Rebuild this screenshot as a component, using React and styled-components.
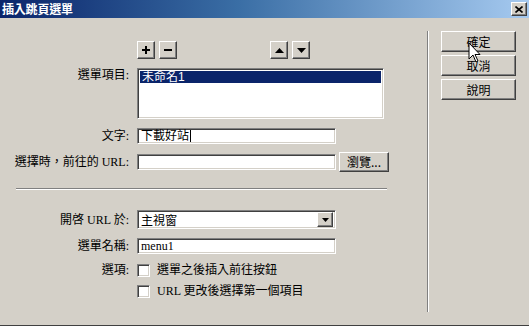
import React from 'react';
import styled, { createGlobalStyle } from 'styled-components';

const Global = createGlobalStyle`
  html, body { margin: 0; padding: 0; background: #d4d0c8; }
  body {
    font-family: "Liberation Serif", "Noto Sans CJK TC", serif;
    font-size: 12px;
    color: #000;
  }
`;

const Window = styled.div`
  position: relative;
  width: 529px;
  height: 326px;
  box-sizing: border-box;
  background: #d4d0c8;
  border-bottom: 1px solid #404040;
  display: flex;
  flex-direction: column;
  overflow: hidden;
`;

const TitleBar = styled.div`
  flex: none;
  height: 18px;
  display: flex;
  align-items: center;
  justify-content: space-between;
  padding: 0 2px;
  background: linear-gradient(to right, #0a246a 0%, #3a6ea5 45%, #a6caf0 100%);
`;

const Title = styled.span`
  color: #fff;
  font-family: "Noto Sans CJK TC", sans-serif;
  font-weight: bold;
  font-size: 12px;
  line-height: 14px;
  letter-spacing: -0.2px;
`;

const raised = `
  box-sizing: border-box;
  background: #d4d0c8;
  border: 1px solid;
  border-color: #fff #404040 #404040 #fff;
  box-shadow: inset -1px -1px #808080, inset 1px 1px #d4d0c8;
`;

const sunken = `
  box-sizing: border-box;
  background: #fff;
  border: 1px solid;
  border-color: #808080 #fff #fff #808080;
  box-shadow: inset 1px 1px #404040, inset -1px -1px #d4d0c8;
`;

const CloseButton = styled.div`
  ${raised}
  width: 16px;
  height: 14px;
  display: flex;
  align-items: center;
  justify-content: center;
`;

const Body = styled.div`
  flex: 1;
  display: flex;
  flex-direction: row;
`;

const Form = styled.div`
  width: 427px;
  box-sizing: border-box;
  padding-top: 23px;
  display: flex;
  flex-direction: column;
`;

const Row = styled.div`
  display: flex;
  align-items: ${p => (p.$top ? 'flex-start' : 'center')};
  height: ${p => p.$h}px;
  margin-top: ${p => p.$mt || 0}px;
`;

const Label = styled.div`
  width: 137px;
  box-sizing: border-box;
  padding-right: 8px;
  text-align: right;
  line-height: 14px;
  white-space: nowrap;
  flex: none;
`;

const ToolButton = styled.div`
  ${raised}
  width: 18px;
  height: 18px;
  display: flex;
  align-items: center;
  justify-content: center;
  margin-left: ${p => p.$ml || 0}px;
`;

const ListBox = styled.div`
  ${sunken}
  width: 247px;
  height: 51px;
  padding: 2px;
`;

const ListItem = styled.div`
  height: 12px;
  line-height: 12px;
  padding-left: 2px;
  background: ${p => (p.$selected ? '#0a246a' : 'transparent')};
  color: ${p => (p.$selected ? '#fff' : '#000')};
  font-family: "Liberation Sans", "Noto Sans CJK TC", sans-serif;
`;

const TextField = styled.div`
  ${sunken}
  width: ${p => p.$w || 199}px;
  height: ${p => p.$h || 16}px;
  padding: 0 3px;
  display: flex;
  align-items: center;
  line-height: 12px;
  white-space: nowrap;
  position: relative;
`;

const Caret = styled.span`
  display: inline-block;
  width: 1px;
  height: 12px;
  background: #000;
  margin-left: 1px;
`;

const PushButton = styled.div`
  ${raised}
  width: ${p => p.$w}px;
  height: ${p => p.$h}px;
  margin-left: ${p => p.$ml || 0}px;
  display: flex;
  align-items: center;
  justify-content: center;
  line-height: 14px;
  font-family: "Noto Sans CJK TC", sans-serif;
  font-size: 12px;
`;

const HSeparator = styled.div`
  margin-top: 16px;
  margin-left: 16px;
  width: 371px;
  height: 2px;
  box-sizing: border-box;
  border-top: 1px solid #808080;
  border-bottom: 1px solid #fff;
`;

const SelectBox = styled.div`
  ${sunken}
  width: 199px;
  height: 19px;
  display: flex;
  align-items: center;
  justify-content: space-between;
  padding: 2px 2px 2px 3px;
  font-family: "Noto Sans CJK TC", sans-serif;
  line-height: 12px;
`;

const DropButton = styled.div`
  ${raised}
  width: 16px;
  height: 15px;
  display: flex;
  align-items: center;
  justify-content: center;
`;

const CheckBox = styled.div`
  ${sunken}
  width: 13px;
  height: 13px;
  flex: none;
`;

const CheckText = styled.span`
  margin-left: 7px;
  line-height: 14px;
  white-space: nowrap;
`;

const Indent = styled.div`
  width: 137px;
  flex: none;
`;

const VSeparator = styled.div`
  width: 2px;
  box-sizing: border-box;
  margin-top: 13px;
  height: 281px;
  border-left: 1px solid #808080;
  border-right: 1px solid #fff;
  flex: none;
`;

const ButtonColumn = styled.div`
  padding-left: 12px;
  padding-top: 13px;
  display: flex;
  flex-direction: column;
  gap: 3px;
`;

const Cursor = styled.svg`
  position: absolute;
  left: 468px;
  top: 42px;
`;

const Plus = () => (
  <svg width="10" height="10" viewBox="0 0 10 10">
    <rect x="4" y="1" width="2" height="8" fill="#000" />
    <rect x="1" y="4" width="8" height="2" fill="#000" />
  </svg>
);

const Minus = () => (
  <svg width="10" height="10" viewBox="0 0 10 10">
    <rect x="1" y="4" width="8" height="2" fill="#000" />
  </svg>
);

const Up = () => (
  <svg width="9" height="5" viewBox="0 0 9 5">
    <polygon points="4.5,0 9,5 0,5" fill="#000" />
  </svg>
);

const Down = ({ w = 9, h = 5 }) => (
  <svg width={w} height={h} viewBox="0 0 9 5">
    <polygon points="0,0 9,0 4.5,5" fill="#000" />
  </svg>
);

export default function App() {
  return (
    <>
      <Global />
      <Window>
        <TitleBar>
          <Title>插入跳頁選單</Title>
          <CloseButton>
            <svg width="8" height="7" viewBox="0 0 8 7">
              <path d="M0.5 0.5 L7.5 6.5 M7.5 0.5 L0.5 6.5" stroke="#000" strokeWidth="1.6" />
            </svg>
          </CloseButton>
        </TitleBar>
        <Body>
          <Form>
            <Row $h={18}>
              <Indent />
              <ToolButton><Plus /></ToolButton>
              <ToolButton $ml={4}><Minus /></ToolButton>
              <ToolButton $ml={93}><Up /></ToolButton>
              <ToolButton $ml={4}><Down /></ToolButton>
            </Row>
            <Row $h={51} $mt={9} $top>
              <Label>選單項目:</Label>
              <ListBox>
                <ListItem $selected>未命名1</ListItem>
              </ListBox>
            </Row>
            <Row $h={16} $mt={9}>
              <Label>文字:</Label>
              <TextField>
                下載好站<Caret />
              </TextField>
            </Row>
            <Row $h={20} $mt={8}>
              <Label>選擇時，前往的 URL:</Label>
              <TextField />
              <PushButton $w={50} $h={20} $ml={3}>瀏覽...</PushButton>
            </Row>
            <HSeparator />
            <Row $h={19} $mt={20}>
              <Label>開啓 URL 於:</Label>
              <SelectBox>
                <span>主視窗</span>
                <DropButton><Down w={7} h={4} /></DropButton>
              </SelectBox>
            </Row>
            <Row $h={16} $mt={9}>
              <Label>選單名稱:</Label>
              <TextField>menu1</TextField>
            </Row>
            <Row $h={16} $mt={8}>
              <Label>選項:</Label>
              <CheckBox />
              <CheckText>選單之後插入前往按鈕</CheckText>
            </Row>
            <Row $h={16} $mt={5}>
              <Indent />
              <CheckBox />
              <CheckText>URL 更改後選擇第一個項目</CheckText>
            </Row>
          </Form>
          <VSeparator />
          <ButtonColumn>
            <PushButton $w={75} $h={21}>確定</PushButton>
            <PushButton $w={75} $h={21}>取消</PushButton>
            <PushButton $w={75} $h={21}>說明</PushButton>
          </ButtonColumn>
        </Body>
        <Cursor width="13" height="21" viewBox="0 0 13 21">
          <path
            d="M1 1 L1 17 L5 13 L8 20 L10 19 L7 12.5 L12 12.5 Z"
            fill="#fff"
            stroke="#000"
            strokeWidth="1"
            strokeLinejoin="miter"
          />
        </Cursor>
      </Window>
    </>
  );
}
